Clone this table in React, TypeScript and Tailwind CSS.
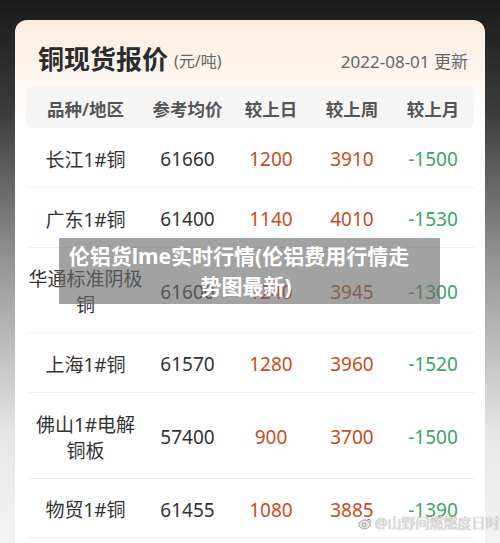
import React from "react";

type Row = { name: React.ReactNode; h: string; avg: string; d: string; w: string; m: string };

const rows: Row[] = [
  { name: "长江1#铜", h: "h-[60px]", avg: "61660", d: "1200", w: "3910", m: "-1500" },
  { name: "广东1#铜", h: "h-[60px]", avg: "61400", d: "1140", w: "4010", m: "-1530" },
  { name: (<>华通标准阴极<br />铜</>), h: "h-[85px]", avg: "61600", d: "1240", w: "3945", m: "-1300" },
  { name: "上海1#铜", h: "h-[60px]", avg: "61570", d: "1280", w: "3960", m: "-1520" },
  { name: (<>佛山1#电解<br />铜板</>), h: "h-[86px]", avg: "57400", d: "900", w: "3700", m: "-1500" },
  { name: "物贸1#铜", h: "h-[59px]", avg: "61455", d: "1080", w: "3885", m: "-1390" },
];

const grid = "grid grid-cols-[119px_85px_82px_80px_82px] items-center text-center";

export default function App() {
  return (
    <div
      className="relative w-[500px] h-[543px] overflow-hidden bg-[linear-gradient(180deg,#1b1b1b_0%,#3a3a3a_20%,#9a9a9a_50%,#e6e6e6_80%,#f3f3f3_100%)] px-[15px] pt-[20px]"
      style={{ fontFamily: '"Noto Sans", "Noto Sans CJK SC", sans-serif' }}
    >
      <div className="h-[560px] rounded-t-[12px] bg-[linear-gradient(180deg,#fcecdd_0px,#fdf3ea_40px,#ffffff_100px)]">
        <div className="flex h-[66px] items-center justify-between pl-[23px] pr-[17px] pt-[12px]">
          <div className="flex items-center">
            <span className="text-[26px] font-bold leading-none text-[#2b2b2b]">铜现货报价</span>
            <span className="ml-[6px] mt-[4px] text-[16px] leading-none text-[#666]">(元/吨)</span>
          </div>
          <span className="mt-[4px] text-[17px] leading-none text-[#666]">2022-08-01 更新</span>
        </div>
        <div className="mx-[11px]">
          <div className={`${grid} h-[42px] rounded-[6px] bg-[#f5f5f5] pt-[4px] text-[17.5px] font-semibold text-[#555]`}>
            <span>品种/地区</span>
            <span>参考均价</span>
            <span>较上日</span>
            <span>较上周</span>
            <span>较上月</span>
          </div>
          {rows.map((r, i) => (
            <div key={i} className={`${grid} ${r.h} border-b border-[#efefef] pt-[4px] text-[19px]`}>
              <span className="leading-[26px] text-[#333]">{r.name}</span>
              <span className="text-[#333]">{r.avg}</span>
              <span className="text-[#c94c20]">{r.d}</span>
              <span className="text-[#c94c20]">{r.w}</span>
              <span className="text-[#3aa565]">{r.m}</span>
            </div>
          ))}
        </div>
      </div>

      <div className="absolute left-[59px] top-[238px] flex h-[66px] w-[381px] flex-col justify-center bg-[rgba(105,105,105,0.62)] text-center text-[21px] font-bold leading-[30px] text-white">
        <span className="block pr-[21px]">伦铝货lme实时行情(伦铝费用行情走</span>
        <span className="block pr-[7px]">势图最新)</span>
      </div>

      <div className="absolute left-[358px] top-[516px] flex items-center gap-[2px] whitespace-nowrap text-[14px] leading-none text-[#e2e2e2] [text-shadow:0_0_1px_#8a8a8a]">
        <svg width="15" height="13" viewBox="0 0 16 14">
          <ellipse cx="7" cy="8" rx="6.2" ry="4.8" fill="#e6e6e6" stroke="#999" strokeWidth="1" />
          <circle cx="6.5" cy="8.5" r="2" fill="none" stroke="#999" strokeWidth="1" />
          <path d="M10 2.5 A3.5 3.5 0 0 1 14 5.5" fill="none" stroke="#999" strokeWidth="1" />
        </svg>
        <span>@山野间燃燃度日时</span>
      </div>
    </div>
  );
}
